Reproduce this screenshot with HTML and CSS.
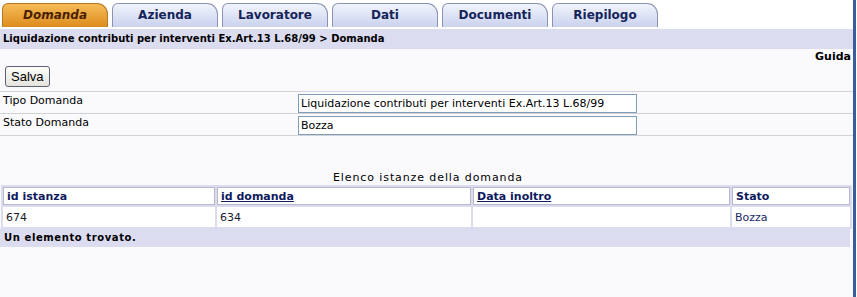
FILE: index.html
```html
<!DOCTYPE html>
<html lang="it">
<head>
    <meta charset="UTF-8">
    <title>Domanda</title>
    <link rel="stylesheet" href="styles.css">
</head>
<body>
    <div class="frame">
        <ul class="tabs">
            <li class="tab active">Domanda</li>
            <li class="tab">Azienda</li>
            <li class="tab">Lavoratore</li>
            <li class="tab">Dati</li>
            <li class="tab">Documenti</li>
            <li class="tab">Riepilogo</li>
        </ul>

        <div class="crumb">Liquidazione contributi per interventi Ex.Art.13 L.68/99 &gt; Domanda</div>

        <div class="content">
            <div class="guida">Guida</div>
            <div class="toolbar"><button class="btn">Salva</button></div>

            <table class="form">
                <tr>
                    <td class="label">Tipo Domanda</td>
                    <td class="field"><input type="text" value="Liquidazione contributi per interventi Ex.Art.13 L.68/99"></td>
                </tr>
                <tr>
                    <td class="label">Stato Domanda</td>
                    <td class="field"><input type="text" value="Bozza"></td>
                </tr>
            </table>

            <div class="caption">Elenco istanze della domanda</div>
            <table class="list">
                <tr>
                    <th class="c1">id istanza</th>
                    <th class="c2"><a href="#">id domanda</a></th>
                    <th class="c3"><a href="#">Data inoltro</a></th>
                    <th class="c4">Stato</th>
                </tr>
                <tr>
                    <td>674</td>
                    <td>634</td>
                    <td></td>
                    <td class="stato">Bozza</td>
                </tr>
            </table>
            <div class="found">Un elemento trovato.</div>
        </div>
    </div>
</body>
</html>
```

FILE: styles.css
```css
* {
    margin: 0;
    padding: 0;
    box-sizing: border-box;
}

body {
    font-family: "DejaVu Sans", Verdana, sans-serif;
    font-size: 11px;
    color: #000;
    background: #fff;
}

.frame {
    width: 856px;
    height: 297px;
    border-right: 3px solid #3b5c9c;
    background: #fafafd;
}

/* tabs */
.tabs {
    list-style: none;
    display: flex;
    gap: 4px;
    padding: 3px 0 0 2px;
    height: 29px;
    background: #fff;
}

.tab {
    width: 106px;
    height: 24px;
    border: 1px solid #8a93b2;
    border-bottom: none;
    border-radius: 6px 11px 0 0;
    background: linear-gradient(#f2f4fc, #c9d2ee);
    color: #15245a;
    font-weight: bold;
    font-size: 12px;
    text-align: center;
    line-height: 23px;
}

.tab.active {
    background: linear-gradient(#f6bc58, #dd8c1e);
    border-color: #b5772a;
    color: #4a1e00;
    font-style: italic;
}

/* breadcrumb */
.crumb {
    background: #dcdcf0;
    height: 20px;
    line-height: 20px;
    padding-left: 3px;
    font-weight: bold;
    font-size: 10px;
}

.guida {
    text-align: right;
    font-weight: bold;
    padding: 1px 2px 0 0;
    height: 14px;
}

.toolbar {
    padding: 3px 0 0 5px;
    height: 28px;
}

.btn {
    font-family: "Liberation Sans", Arial, sans-serif;
    font-size: 13px;
    padding: 0 5px;
    height: 21px;
    border: 1px solid #5a6274;
    border-radius: 3px;
    background: linear-gradient(#fdfdfb, #e4e3dc);
}

/* form rows */
.form {
    width: 100%;
    border-collapse: collapse;
    border-top: 1px solid #d2d2d8;
}

.form td {
    height: 22px;
    border-bottom: 1px solid #d2d2d8;
    vertical-align: top;
}

.form .label {
    width: 298px;
    padding: 2px 0 0 3px;
}

.form .field {
    padding: 2px 0 0 0;
}

.form input {
    width: 339px;
    height: 19px;
    border: 1px solid #7f9db9;
    background: #fff;
    font-family: "DejaVu Sans", Verdana, sans-serif;
    font-size: 11px;
    padding: 0 2px;
}

/* list */
.caption {
    margin-top: 35px;
    text-align: center;
    height: 14px;
    font-size: 11px;
    letter-spacing: 0.9px;
    padding-left: 3px;
}

.list {
    width: 851px;
    margin-left: 1px;
    border-spacing: 2px;
    background: #dcdcf0;
}

.list th,
.list td {
    background: #fff;
    text-align: left;
    padding: 0 3px;
}

.list th {
    height: 18px;
    border: 1px solid #b8b8c8;
    color: #0e1a5e;
    font-size: 11px;
}

.list td {
    height: 20px;
    font-size: 11px;
    color: #1a1a2a;
}

.list a {
    color: #0e1a5e;
}

.list .c1 { width: 212px; }
.list .c2 { width: 254px; }
.list .c3 { width: 257px; }

.list .stato {
    color: #1a2a6a;
}

.found {
    background: #dcdcf0;
    margin: 0 3px 0 0;
    height: 18px;
    line-height: 18px;
    padding-left: 4px;
    font-weight: bold;
    font-size: 10px;
    letter-spacing: 0.6px;
}
```
